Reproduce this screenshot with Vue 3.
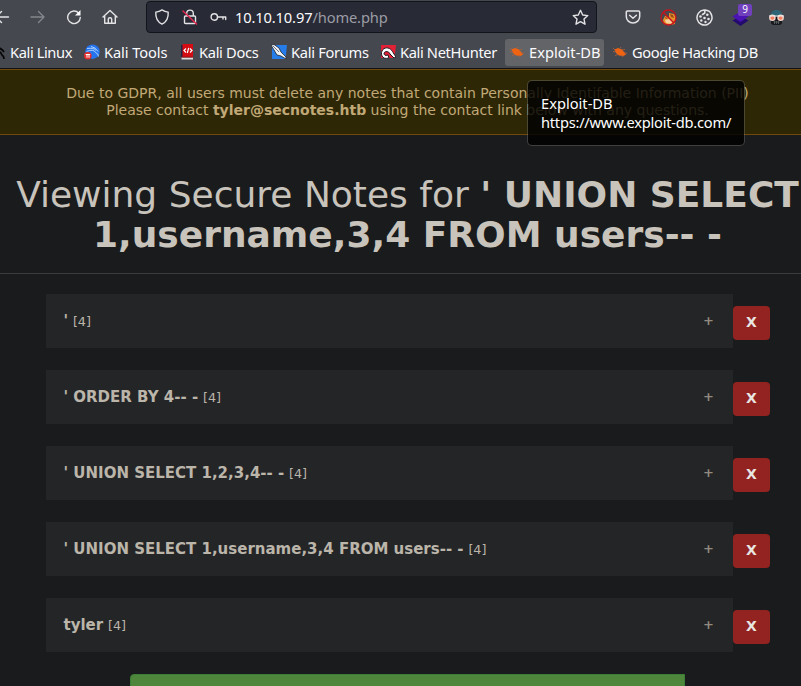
<script setup>
const notes = [
  "'",
  "' ORDER BY 4-- -",
  "' UNION SELECT 1,2,3,4-- -",
  "' UNION SELECT 1,username,3,4 FROM users-- -",
  'tyler',
]
</script>

<template>
  <div class="window">
    <header class="chrome">
      <div class="toolbar">
        <nav class="nav">
          <svg width="16" height="16" viewBox="0 0 16 16" class="line"><path d="M14.500 8H2M7.500 2.500 2 8l5.500 5.500" /></svg>
          <svg width="16" height="16" viewBox="0 0 16 16" class="line dim"><path d="M1 8h13M8.500 2.500 14 8l-5.500 5.500" /></svg>
          <svg width="16" height="16" viewBox="0 0 16 16" class="line"><path d="M12.800 4.200A6.300 6.300 0 1 0 14.300 8.500" /><path d="M14.500 1v5.500H9z" fill="#fbfbfe" stroke="none" /></svg>
          <svg width="16" height="16" viewBox="0 0 16 16" class="line"><path d="M1 8 8 1.500 15 8M2.700 7v7.300h10.600V7M6.300 14.300V10q0-1.200 1.700-1.200T9.700 10v4.300" /></svg>
        </nav>
        <div class="urlbar">
          <svg width="16" height="16" viewBox="0 0 16 16" class="line"><path d="M8 .9c2 1.400 4 2 6.200 2.200.3 5-1 9.500-6.200 12-5.200-2.500-6.500-7-6.200-12C4 2.900 6 2.300 8 .9z" /></svg>
          <svg width="16" height="16" viewBox="0 0 16 16" class="line lock"><path d="M4.700 7V4.400a3.300 3.300 0 0 1 6.600 0V7M3.500 7h9q1 0 1 1v5.500q0 1-1 1h-9q-1 0-1-1V8q0-1 1-1z" /><path d="M1 2l13.500 13" stroke="#e22850" stroke-width="1.500" /></svg>
          <svg width="17" height="16" viewBox="0 0 17 16" class="line key"><circle cx="4.300" cy="8" r="3.200" /><path d="M7.500 8H15.700v2.600M13 8v2" /></svg>
          <div class="url"><span>10.10.10.97</span>/home.php</div>
          <svg width="17" height="17" viewBox="0 0 17 17" class="line"><path d="m8.500 1.300 2.200 4.700 5.100.6-3.800 3.500 1 5.100-4.500-2.500L4 15.200l1-5.100L1.200 6.600 6.300 6z" /></svg>
        </div>
        <div class="extensions">
          <svg width="16" height="16" viewBox="0 0 16 16" class="line"><path d="M2.500 2h11q1.200 0 1.200 1.200V7.500a6.700 6.500 0 0 1-13.400 0V3.200Q1.300 2 2.500 2zM4.600 6.200 8 9.300l3.400-3.100" stroke-width="1.500" /></svg>
          <svg class="fox" width="17" height="17" viewBox="0 0 17 17"><path d="M3 11 5 7l4 1 0-4 5 1 2 4-1 3 0 3-5 1-6-1z" fill="#e8902c" /><path d="m5 11 4-1 4 2-2 3-5-1z" fill="#f8d09b" /><path d="m10 5 3 1 1 3-3-1zM5 8l3 1-2 1z" fill="#9b4b13" /><circle cx="8.500" cy="8.500" r="7.500" fill="none" stroke="#c7131c" stroke-width="1.300" /><path d="m3 3 11 11" stroke="#c7131c" stroke-width="1.400" /></svg>
          <svg width="17" height="17" viewBox="0 0 17 17" class="line"><path d="M8 1.100A7.500 7.500 0 1 0 14.800 4.500Q14 1.800 8.800 1.100V4L6.500 5.500M8.800 1.100" stroke-width="1.500" /><g fill="#e3e3e6" stroke="none"><circle cx="4.500" cy="7.500" r="1.300" /><circle cx="5.300" cy="11.500" r="1.200" /><circle cx="8.500" cy="9" r="1.300" /><circle cx="9.500" cy="13" r="1.200" /><circle cx="12.500" cy="10" r="1.300" /><circle cx="11.300" cy="5.800" r="1.300" /></g></svg>
          <div class="layers">
            <svg width="17" height="17" viewBox="0 0 17 17"><path d="m.5 11.500 8-4.500 8 4.500-8 5.500z" fill="#240a6e" /><path d="m.5 7.500 8-5 8 5-8 5.500z" fill="#4b12b4" /></svg>
            <b>9</b>
          </div>
          <svg class="agent" width="17" height="17" viewBox="0 0 17 17"><path d="M2.500 7c0-4 3-6 6-6s6 2 6 6z" fill="#2c6676" /><path d="M3 8h11v6.500L12 16H5l-2-1.500z" fill="#17191c" /><path d="M5.500 13h6M6.500 12v3m2-3v3m2-3v3" stroke="#5f656b" stroke-width=".8" /><g fill="#f47a60" stroke="#eed5c8" stroke-width="1.400"><circle cx="4.400" cy="8.800" r="2.600" /><circle cx="12.600" cy="8.800" r="2.600" /></g><path d="M1 7h15" stroke="#eee" /></svg>
        </div>
      </div>
      <nav class="bookmarks">
        <a class="bm linux"><svg width="16" height="16" viewBox="0 0 16 16"><path d="M4 2q8 2 10 6M4 7q6-1 8 4 2 1 2 4M8 4q4 1 6 4" fill="none" stroke="#050505" stroke-width="1.700" /></svg><span>Kali Linux</span></a>
        <a class="bm tools"><svg width="16" height="16" viewBox="0 0 16 16"><circle cx="8.500" cy="7.700" r="7.300" fill="#2374ee" /><path d="M3 4.500q7-1 9 2M2.500 7.500q7-3 9 1 3 1 3 4M7 2.500q5 1 7 5" fill="none" stroke="#bcdcff" stroke-width=".9" /><circle cx="3.800" cy="11.700" r="3.800" fill="#e42b2c" /><path d="M1.700 10.500h4.500M3 10.500v3.300m2-3.300v3.300" stroke="#fff" stroke-width="1" /></svg><span>Kali Tools</span></a>
        <a class="bm docs"><svg width="14" height="16" viewBox="0 0 14 16"><path d="M1 1h2v14H1z" fill="#252345" /><path d="M2.500 0H13v13H2.500z" fill="#d50c13" /><path d="M1.500 13H13v2.500H1.500z" fill="#dedee0" /><path d="M1.500 12.700H13v1H1.500z" fill="#83171d" /><path d="M6 4.500 4 6.500l2 2m4-4 2 2-2 2M8.700 3.800 7.300 9" fill="none" stroke="#fff" stroke-width="1.200" /></svg><span>Kali Docs</span></a>
        <a class="bm forums"><svg width="16" height="16" viewBox="0 0 16 16"><path d="M1 1h15l-1.500 14H1z" fill="#267de9" /><path d="m0 1 3-.5L8 4l2 4 5 5v2l-5-3-4-1-3-5z" fill="#eceff3" stroke="#20242c" stroke-width=".8" /><path d="m2 2 6 6" stroke="#4c535d" stroke-width=".8" /></svg><span>Kali Forums</span></a>
        <a class="bm hunter"><svg width="16" height="16" viewBox="0 0 16 16"><path d="M1 1h15l-1.500 13H1z" fill="#e32136" /><path d="M2 12C0 7 4 3 8 4c4 1 5 5 8 9l-2 1-4-4c-1-3-5-3-6-1 0 2 1 3 4 2l1 3c-4 1-6 0-7-2z" fill="#fff" stroke="#201c22" stroke-width="1" /></svg><span>Kali NetHunter</span></a>
        <a class="bm exploit active"><svg width="16" height="16" viewBox="0 0 16 16"><path d="M2.500 5.500 6 4l4 1.500 2 2.500 2 2.500-2.500 1.500L7 11.500 4 9z" fill="#ee6412" /><path d="m3 6-2-2M4 8 1 7.500m5 3-3 1m7-.5 1 2m-3-8.500L9 3m1 3 3-.5m-1 3 3 1" stroke="#b7603a" stroke-width=".8" /></svg><span>Exploit-DB</span></a>
        <a class="bm google"><svg width="16" height="16" viewBox="0 0 16 16"><path d="M2.500 5.500 6 4l4 1.500 2 2.500 2 2.500-2.500 1.500L7 11.500 4 9z" fill="#ee6412" /><path d="m3 6-2-2M4 8 1 7.500m5 3-3 1m7-.5 1 2m-3-8.500L9 3m1 3 3-.5m-1 3 3 1" stroke="#b7603a" stroke-width=".8" /></svg><span>Google Hacking DB</span></a>
      </nav>
    </header>

    <main class="page">
      <div class="notice">
        Due to GDPR, all users must delete any notes that contain Personally Identifable Information (PII)<br>
        Please contact <strong>tyler@secnotes.htb</strong> using the contact link below with any questions.
      </div>
      <h1>Viewing Secure Notes for <b>' UNION SELECT<br>1,username,3,4 FROM users-- -</b></h1>
      <section class="notes">
        <div v-for="note in notes" :key="note" class="row">
          <button class="note"><span class="label"><strong>{{ note }}</strong> <small>[4]</small></span><span class="plus">+</span></button>
          <button class="delete">X</button>
        </div>
      </section>
      <div class="new-note"></div>
    </main>

    <div class="tooltip">Exploit-DB<br><span>https://www.exploit-db.com/</span></div>
  </div>
</template>

<style>
body { margin: 0; background: #1a1b1d; overflow: hidden; }
</style>

<style scoped>
* { box-sizing: border-box; }
svg { display: block; flex: none; }
button { border: 0; font: inherit; }
.window { position: relative; width: 801px; height: 686px; overflow: hidden; background: #1a1b1d; }
.chrome { height: 69px; background: #45484f; border-bottom: 1px solid #101115; font-family: "Noto Sans", sans-serif; color: #fbfbfe; }
.line { fill: none; stroke: #e3e3e6; stroke-width: 1.400; stroke-linecap: round; stroke-linejoin: round; }
.dim { opacity: .4; }
.toolbar { display: flex; height: 34px; align-items: center; }
.nav { display: flex; gap: 20px; width: 146px; margin-left: -6px; }
.urlbar { display: flex; align-items: center; width: 451px; height: 32px; margin-left: 6px; padding: 0 7px; border: 1px solid #131419; border-radius: 4px; background: #282a36; }
.lock { margin-left: 12px; }
.key { margin-left: 12px; }
.url { flex: 1; margin-left: 8px; font-size: 14.670px; line-height: 20px; letter-spacing: -.13px; color: #9c9da5; white-space: nowrap; }
.url span { color: #fbfbfe; }
.extensions { display: flex; align-items: center; gap: 19px; margin-left: 28px; }
.layers { position: relative; }
.layers b { position: absolute; left: 6px; top: -5px; width: 14px; height: 12px; border-radius: 2px; background: #7040bd; font-size: 10px; font-weight: 400; line-height: 11px; text-align: center; }
.bookmarks { display: flex; align-items: center; height: 34px; padding-top: 2px; }
.bm { display: flex; flex: none; align-items: center; height: 27px; gap: 4px; font-size: 14.670px; line-height: 20px; white-space: nowrap; }
.linux { width: 94px; margin-left: -10px; letter-spacing: -.4px; }
.tools { width: 96px; letter-spacing: -.1px; }
.docs { width: 91px; gap: 5px; letter-spacing: -.33px; }
.forums { width: 109px; letter-spacing: -.3px; }
.hunter { width: 125px; letter-spacing: -.36px; }
.exploit { width: 99px; padding-left: 4px; border-radius: 3px; }
.active { background: #636467; }
.google { margin-left: 8px; letter-spacing: -.42px; }
.page { width: 815px; font-family: "DejaVu Sans", sans-serif; color: #c8c3bb; }
.notice { height: 66px; padding-top: 15px; border: solid #70490b; border-width: 1px 0; background: #2e2706; color: #c1a977; font-size: 14px; line-height: 17px; text-align: center; white-space: nowrap; }
h1 { height: 139px; margin: 0; padding-top: 40px; border-bottom: 1px solid #3a3d40; font-size: 36px; font-weight: 400; line-height: 40px; text-align: center; white-space: nowrap; }
.notes { display: flex; flex-direction: column; gap: 22px; padding: 20px 0 22px 46px; }
.row { display: flex; height: 54px; }
.note { display: flex; align-items: center; justify-content: space-between; width: 687px; padding: 0 18px 0 17.500px; background: #242527; color: #bbb5aa; font-size: 15px; text-align: left; }
.label { font-size: 15px; }
.label small { font-size: 12.750px; }
.plus { padding-bottom: 1px; font-weight: 700; font-size: 13px; line-height: 15px; color: #918a7f; margin-right: 1px; }
.delete { width: 37px; height: 34px; margin-top: 12px; padding: 0 0 2px; border-radius: 4px; background: #922320; color: #e8e6e3; font-weight: 700; font-size: 14px; }
.new-note { width: 555px; height: 40px; margin-left: 130px; border: 1px solid #3b7e36; border-radius: 4px 0 0 0; background: #4e873b; }
.tooltip { position: absolute; left: 527px; top: 80px; width: 218px; height: 66px; padding: 13px; border: 1px solid rgba(120,120,115,.4); border-radius: 5px; background: rgba(0,0,0,.82); background-clip: padding-box; color: #fff; font-family: "Noto Sans", sans-serif; font-size: 14.670px; line-height: 19px; white-space: nowrap; }
.tooltip span { letter-spacing: -.24px; }
</style>
